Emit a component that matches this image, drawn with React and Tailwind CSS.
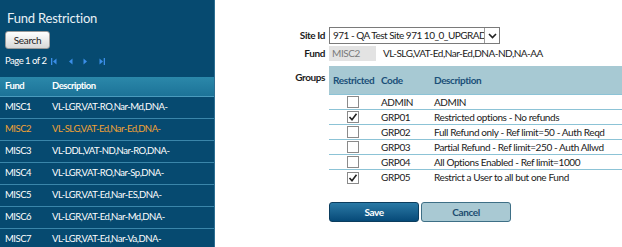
import { useState } from 'react';

const funds = [
  { code: 'MISC1', desc: 'VL-LGR,VAT-RO,Nar-Md,DNA-' },
  { code: 'MISC2', desc: 'VL-SLG,VAT-Ed,Nar-Ed,DNA-', active: true },
  { code: 'MISC3', desc: 'VL-DDL,VAT-ND,Nar-RO,DNA-' },
  { code: 'MISC4', desc: 'VL-LGR,VAT-RO,Nar-Sp,DNA-' },
  { code: 'MISC5', desc: 'VL-LGR,VAT-Ed,Nar-ES,DNA-' },
  { code: 'MISC6', desc: 'VL-LGR,VAT-Ed,Nar-Md,DNA-' },
  { code: 'MISC7', desc: 'VL-LGR,VAT-Ed,Nar-Va,DNA-' },
];

const groups = [
  { code: 'ADMIN', desc: 'ADMIN', checked: false },
  { code: 'GRP01', desc: 'Restricted options - No refunds', checked: true },
  { code: 'GRP02', desc: 'Full Refund only - Ref limit=50 - Auth Reqd', checked: false },
  { code: 'GRP03', desc: 'Partial Refund - Ref limit=250 - Auth Allwd', checked: false },
  { code: 'GRP04', desc: 'All Options Enabled - Ref limit=1000', checked: false },
  { code: 'GRP05', desc: 'Restrict a User to all but one Fund', checked: true },
];

function Checkbox({ checked, onClick }) {
  return (
    <span
      onClick={onClick}
      className="w-[12px] h-[12px] border border-[#8a8a8a] bg-white flex items-center justify-center"
    >
      {checked && (
        <svg width="10" height="10" viewBox="0 0 10 10">
          <path d="M1.5 5 L4 7.8 L8.5 1.8" fill="none" stroke="#222" strokeWidth="1.6" />
        </svg>
      )}
    </span>
  );
}

function Arrow({ dir, bar }) {
  // tiny pager arrows
  return (
    <svg width="6" height="9" viewBox="0 0 6 9">
      {bar === 'left' && <rect x="0" y="1" width="1.3" height="7" fill="#3b8ee8" />}
      {dir === 'left' ? (
        <path d="M5.5 1.5 L2 4.5 L5.5 7.5 Z" fill="#3b8ee8" />
      ) : (
        <path d="M0.5 1.5 L4 4.5 L0.5 7.5 Z" fill="#3b8ee8" />
      )}
      {bar === 'right' && <rect x="4.7" y="1" width="1.3" height="7" fill="#3b8ee8" />}
    </svg>
  );
}

export default function App() {
  const [rows, setRows] = useState(groups);

  const toggle = (i) => {
    setRows(rows.map((r, j) => (j === i ? { ...r, checked: !r.checked } : r)));
  };

  return (
    <div className="flex w-[622px] h-[247px] overflow-hidden bg-white text-[10px] tracking-[-0.4px] font-['Lato',sans-serif]">
      {/* Fund list panel */}
      <div className="w-[215px] shrink-0 bg-[#064a70] border-r border-[#2d6f92] text-white text-[9.5px] tracking-[-0.5px]">
        <div className="h-[31px] pl-[7px] pt-[8px] text-[13px] leading-[20px] tracking-[-0.2px] text-[#e8f1f6]">Fund Restriction</div>
        <div className="pl-[5px]">
          <button className="w-[45px] h-[18px] rounded-[3px] border border-[#9a9a9a] bg-gradient-to-b from-white to-[#d8d8d8] text-[#222] text-[10px] tracking-[-0.3px] leading-[16px]">
            Search
          </button>
        </div>
        <div className="flex items-center pl-[5px] mt-[2px] h-[20px] text-white">
          <span className="mr-[5px]">Page 1 of 2</span>
          <span className="flex items-center gap-[10px]">
            <Arrow dir="left" bar="left" />
            <Arrow dir="left" />
            <Arrow dir="right" />
            <Arrow dir="right" bar="right" />
          </span>
        </div>
        <div className="mt-[6px] flex h-[20px] items-center bg-gradient-to-b from-[#2b88aa] to-[#1c7398] font-bold border-b border-[#4a9bbd]">
          <span className="w-[52px] pl-[5px]">Fund</span>
          <span>Description</span>
        </div>
        {funds.map((f) => (
          <div
            key={f.code}
            className={`flex h-[22px] items-center border-b border-[#3a86aa] ${f.active ? 'text-[#f2a234]' : 'text-white'}`}
          >
            <span className="w-[52px] pl-[5px]">{f.code}</span>
            <span>{f.desc}</span>
          </div>
        ))}
      </div>

      {/* Detail panel */}
      <div className="flex-1 pt-[27px] text-[#1b1b1b]">
        <div className="grid grid-cols-[110px_1fr] gap-x-[4px]">
          <div className="h-[17px] flex items-center justify-end font-bold">Site Id</div>
          <div className="flex h-[17px] w-[171px] border border-[#7a7a7a] bg-white">
            <span className="flex-1 overflow-hidden whitespace-nowrap pl-[3px] leading-[15px] tracking-[-0.5px]">971 - QA Test Site 971 10_0_UPGRADE</span>
            <span className="w-[15px] border-l border-[#9a9a9a] flex items-center justify-center">
              <svg width="9" height="6" viewBox="0 0 9 6">
                <path d="M1 1 L4.5 4.5 L8 1" fill="none" stroke="#222" strokeWidth="1.6" />
              </svg>
            </span>
          </div>

          <div className="mt-[2px] h-[15px] flex items-center justify-end font-bold">Fund</div>
          <div className="mt-[2px] flex items-center h-[15px]">
            <span className="w-[47px] h-[15px] bg-[#e3e3e3] text-[#7a7a7a] pl-[3px] leading-[15px]">MISC2</span>
            <span className="ml-[7px] tracking-[-0.5px]">VL-SLG,VAT-Ed,Nar-Ed,DNA-ND,NA-AA</span>
          </div>

          <div className="mt-[5px] pt-[4px] flex justify-end font-bold">Groups</div>
          <div className="mt-[5px]">
            <div className="flex h-[29px] items-center bg-[#a7c9d3] border-b border-[#8cc3d6] font-bold text-[#1a4f78]">
              <span className="w-[48px] pl-[4px]">Restricted</span>
              <span className="w-[53px] pl-[4px]">Code</span>
              <span className="pl-[4px]">Description</span>
            </div>
            {rows.map((g, i) => (
              <div
                key={g.code}
                className={`flex h-[15px] items-center ${i < rows.length - 1 ? 'border-b border-[#8cc3d6]' : ''}`}
              >
                <span className="w-[48px] flex justify-center">
                  <Checkbox checked={g.checked} onClick={() => toggle(i)} />
                </span>
                <span className="w-[53px] pl-[4px]">{g.code}</span>
                <span className="pl-[4px] whitespace-nowrap">{g.desc}</span>
              </div>
            ))}
            <div className="mt-[17px] flex gap-[2px]">
              <button className="w-[90px] h-[20px] rounded-[3px] border border-[#0b3d5e] bg-gradient-to-b from-[#2a7aa6] to-[#064a78] text-white font-bold">
                Save
              </button>
              <button className="w-[90px] h-[20px] rounded-[3px] border border-[#3e6f86] bg-[#a9c9d3] text-[#1d4d70] font-bold">
                Cancel
              </button>
            </div>
          </div>
        </div>
      </div>
    </div>
  );
}
